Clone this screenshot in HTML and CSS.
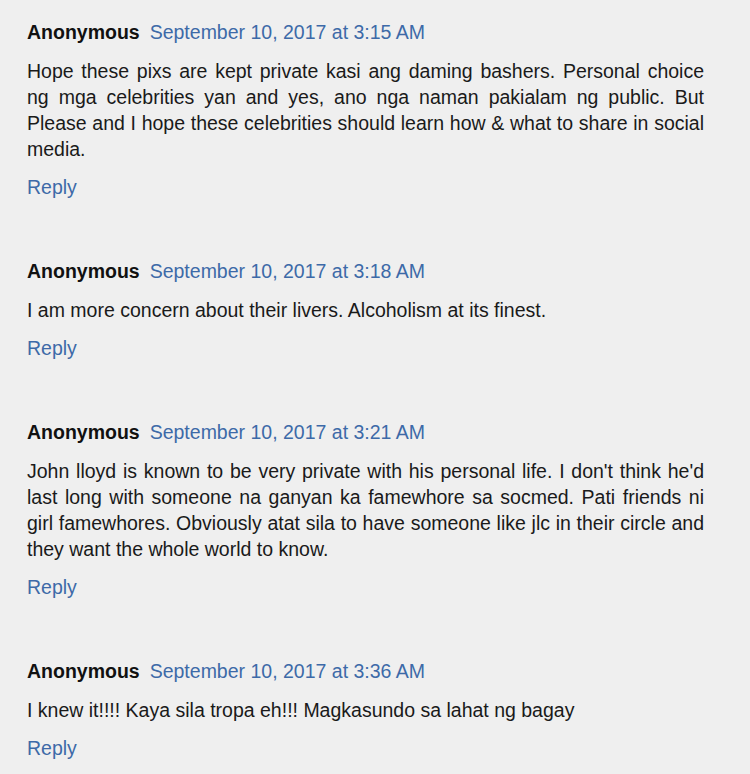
FILE: index.html
```html
<!DOCTYPE html>
<html>
<head>
<meta charset="utf-8">
<link rel="stylesheet" href="styles.css">
</head>
<body>
<div class="comments">
  <div class="comment">
    <div class="head"><span class="name">Anonymous</span><a class="date">September 10, 2017 at 3:15 AM</a></div>
    <p class="body">Hope these pixs are kept private kasi ang daming bashers. Personal choice ng mga celebrities yan and yes, ano nga naman pakialam ng public. But Please and I hope these celebrities should learn how &amp; what to share in social media.</p>
    <a class="reply">Reply</a>
  </div>
  <div class="comment">
    <div class="head"><span class="name">Anonymous</span><a class="date">September 10, 2017 at 3:18 AM</a></div>
    <p class="body">I am more concern about their livers. Alcoholism at its finest.</p>
    <a class="reply">Reply</a>
  </div>
  <div class="comment">
    <div class="head"><span class="name">Anonymous</span><a class="date">September 10, 2017 at 3:21 AM</a></div>
    <p class="body">John lloyd is known to be very private with his personal life. I don't think he'd last long with someone na ganyan ka famewhore sa socmed. Pati friends ni girl famewhores. Obviously atat sila to have someone like jlc in their circle and they want the whole world to know.</p>
    <a class="reply">Reply</a>
  </div>
  <div class="comment">
    <div class="head"><span class="name">Anonymous</span><a class="date">September 10, 2017 at 3:36 AM</a></div>
    <p class="body">I knew it!!!! Kaya sila tropa eh!!! Magkasundo sa lahat ng bagay</p>
    <a class="reply">Reply</a>
  </div>
</div>
</body>
</html>
```
FILE: styles.css
```css
html, body {
  margin: 0;
  padding: 0;
  background: #efefef;
}
body {
  font-family: "Liberation Sans", Arial, sans-serif;
  font-size: 19.5px;
  line-height: 26px;
  color: #1a1a1a;
}
.comments {
  padding: 19px 0 0 27px;
  width: 677px;
  display: flex;
  flex-direction: column;
  gap: 58px;
}
.comment {
  display: flex;
  flex-direction: column;
  align-items: flex-start;
}
.head {
  display: flex;
  align-items: baseline;
  margin-bottom: 12.5px;
}
.name {
  font-weight: bold;
  color: #111;
}
.date {
  margin-left: 10px;
  color: #3d6aa8;
}
.body {
  margin: 0 0 12.5px 0;
  text-align: justify;
  align-self: stretch;
}
.reply {
  color: #3d6aa8;
}
```
